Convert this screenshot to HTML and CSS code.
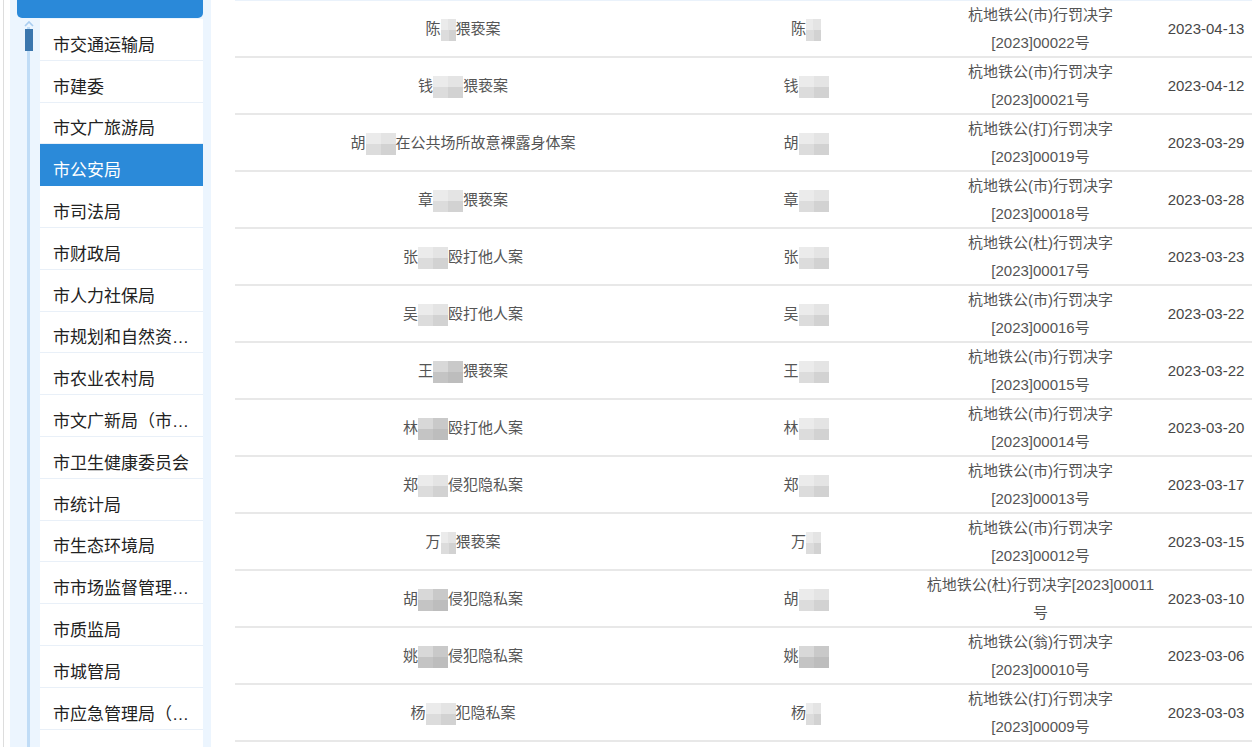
FILE: index.html
```html
<!DOCTYPE html>
<html lang="zh-CN">
<head>
<meta charset="utf-8">
<title>行政处罚公示</title>
<link rel="stylesheet" href="styles.css">
</head>
<body>
<div class="page">
  <aside class="side">
    <div class="panel">
      <div class="panel-head"></div>
      <div class="panel-body">
        <div class="track">
          <svg class="track-arrow" width="10" height="7" viewBox="0 0 10 7"><path d="M1 6 L5 2 L9 6" fill="none" stroke="#a9cdf0" stroke-width="1.6"/></svg>
          <div class="track-gap"></div>
          <div class="track-thumb"></div>
          <div class="track-line"></div>
        </div>
        <ul class="list">
          <li class="item"><span class="label">市交通运输局</span></li>
          <li class="item"><span class="label">市建委</span></li>
          <li class="item"><span class="label">市文广旅游局</span></li>
          <li class="item active"><span class="label">市公安局</span></li>
          <li class="item"><span class="label">市司法局</span></li>
          <li class="item"><span class="label">市财政局</span></li>
          <li class="item"><span class="label">市人力社保局</span></li>
          <li class="item"><span class="label">市规划和自然资源局</span></li>
          <li class="item"><span class="label">市农业农村局</span></li>
          <li class="item"><span class="label">市文广新局（市新闻出版局）</span></li>
          <li class="item"><span class="label">市卫生健康委员会</span></li>
          <li class="item"><span class="label">市统计局</span></li>
          <li class="item"><span class="label">市生态环境局</span></li>
          <li class="item"><span class="label">市市场监督管理局（市知识产权局）</span></li>
          <li class="item"><span class="label">市质监局</span></li>
          <li class="item"><span class="label">市城管局</span></li>
          <li class="item"><span class="label">市应急管理局（市地震局）</span></li>
          <li class="item item-empty"></li>
        </ul>
      </div>
    </div>
  </aside>
  <main class="main">
    <div class="rows">
      <div class="row"><div>陈<span class="mz w1"></span>猥亵案</div><div>陈<span class="mz w1"></span></div><div>杭地铁公(市)行罚决字<br>[2023]00022号</div><div class="date">2023-04-13</div></div>
      <div class="row"><div>钱<span class="mz"></span>猥亵案</div><div>钱<span class="mz"></span></div><div>杭地铁公(市)行罚决字<br>[2023]00021号</div><div class="date">2023-04-12</div></div>
      <div class="row"><div>胡<span class="mz"></span>在公共场所故意裸露身体案</div><div>胡<span class="mz"></span></div><div>杭地铁公(打)行罚决字<br>[2023]00019号</div><div class="date">2023-03-29</div></div>
      <div class="row"><div>章<span class="mz"></span>猥亵案</div><div>章<span class="mz"></span></div><div>杭地铁公(市)行罚决字<br>[2023]00018号</div><div class="date">2023-03-28</div></div>
      <div class="row"><div>张<span class="mz"></span>殴打他人案</div><div>张<span class="mz"></span></div><div>杭地铁公(杜)行罚决字<br>[2023]00017号</div><div class="date">2023-03-23</div></div>
      <div class="row"><div>吴<span class="mz"></span>殴打他人案</div><div>吴<span class="mz"></span></div><div>杭地铁公(市)行罚决字<br>[2023]00016号</div><div class="date">2023-03-22</div></div>
      <div class="row"><div>王<span class="mz dark"></span>猥亵案</div><div>王<span class="mz"></span></div><div>杭地铁公(市)行罚决字<br>[2023]00015号</div><div class="date">2023-03-22</div></div>
      <div class="row"><div>林<span class="mz dark"></span>殴打他人案</div><div>林<span class="mz"></span></div><div>杭地铁公(市)行罚决字<br>[2023]00014号</div><div class="date">2023-03-20</div></div>
      <div class="row"><div>郑<span class="mz"></span>侵犯隐私案</div><div>郑<span class="mz"></span></div><div>杭地铁公(市)行罚决字<br>[2023]00013号</div><div class="date">2023-03-17</div></div>
      <div class="row"><div>万<span class="mz w1"></span>猥亵案</div><div>万<span class="mz w1"></span></div><div>杭地铁公(市)行罚决字<br>[2023]00012号</div><div class="date">2023-03-15</div></div>
      <div class="row"><div>胡<span class="mz dark"></span>侵犯隐私案</div><div>胡<span class="mz"></span></div><div>杭地铁公(杜)行罚决字[2023]00011<br>号</div><div class="date">2023-03-10</div></div>
      <div class="row"><div>姚<span class="mz dark"></span>侵犯隐私案</div><div>姚<span class="mz dark"></span></div><div>杭地铁公(翁)行罚决字<br>[2023]00010号</div><div class="date">2023-03-06</div></div>
      <div class="row"><div>杨<span class="mz"></span>犯隐私案</div><div>杨<span class="mz w1"></span></div><div>杭地铁公(打)行罚决字<br>[2023]00009号</div><div class="date">2023-03-03</div></div>
      <div class="row"><div>李<span class="mz"></span>猥亵案</div><div>李<span class="mz"></span></div><div>杭地铁公(市)行罚决字<br>[2023]00008号</div><div class="date">2023-03-01</div></div>
    </div>
  </main>
</div>
</body>
</html>
```

FILE: styles.css
```css
html, body {
  margin: 0;
  padding: 0;
  background: #ffffff;
  overflow: hidden;
}

body {
  font-family: "Liberation Sans", "Noto Sans CJK SC", sans-serif;
}

.page {
  display: flex;
  height: 747px;
  overflow: hidden;
}

/* ---------- sidebar ---------- */
.side {
  flex: none;
  margin-left: 3px;
  border-left: 1px solid #dddddd;
  padding-left: 6px;
  height: 100%;
}

.panel {
  width: 186px;
  height: 100%;
  background: #ecf5fe;
  padding: 0 8px 0 7px;
  display: flex;
  flex-direction: column;
}

.panel-head {
  flex: none;
  height: 18px;
  background: #2a89d9;
  border-radius: 0 0 5px 5px;
}

.panel-body {
  flex: 1;
  min-height: 0;
  display: flex;
  margin-top: 1px;
}

.track {
  flex: none;
  width: 23px;
  display: flex;
  flex-direction: column;
  align-items: center;
}

.track-arrow {
  display: block;
  margin-top: 1px;
  flex: none;
}

.track-gap {
  flex: none;
  width: 3px;
  height: 2px;
  background: #c0dcf6;
}

.track-thumb {
  flex: none;
  width: 8px;
  height: 22px;
  background: #3b76ad;
}

.track-line {
  flex: 1;
  width: 3px;
  background: #c0dcf6;
}

.list {
  width: 163px;
  margin: 0;
  padding: 0;
  list-style: none;
  background: #ffffff;
}

.item {
  box-sizing: border-box;
  height: 41.8px;
  padding: 8px 8px 0 13px;
  display: flex;
  align-items: center;
  border-bottom: 1px solid #e9f0f8;
  font-size: 17px;
  color: #222222;
}

.item.active {
  background: #2b8ad9;
  color: #ffffff;
  border-bottom-color: #2b8ad9;
}

.label {
  min-width: 0;
  overflow: hidden;
  white-space: nowrap;
  text-overflow: ellipsis;
}

/* ---------- table ---------- */
.main {
  flex: none;
  width: 1017px;
  margin-left: 24px;
}

.rows {
  border-top: 1px solid #eaf2fb;
}

.row {
  display: grid;
  grid-template-columns: 456px 230px 239px 92px;
  height: 55px;
  border-bottom: 2px solid #e8e8e8;
  align-items: center;
  text-align: center;
  font-size: 15px;
  line-height: 27.5px;
  color: #555555;
  white-space: nowrap;
}

.date {
  color: #474747;
}

.mz {
  display: inline-block;
  vertical-align: middle;
  width: 30px;
  height: 22px;
  background: conic-gradient(#e4e4e4 0 25%, #d2d2d2 0 50%, #dcdcdc 0 75%, #ebebeb 0);
}

.mz.w1 {
  width: 15px;
}

.mz.dark {
  background: conic-gradient(#c9c9c9 0 25%, #bdbdbd 0 50%, #c4c4c4 0 75%, #d8d8d8 0);
}
```
